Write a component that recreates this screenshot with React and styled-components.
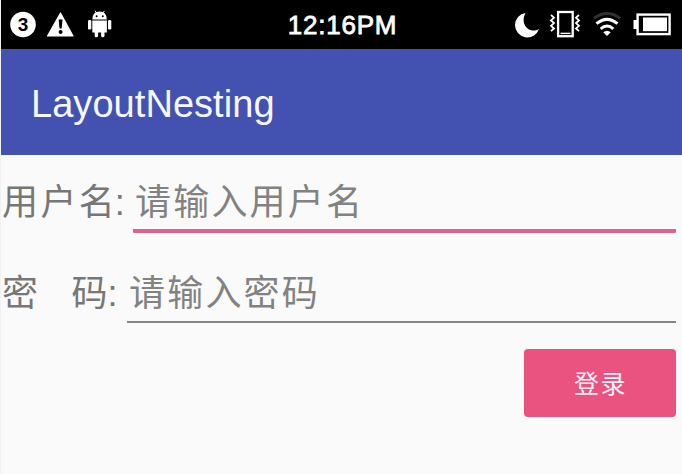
import React from 'react';
import styled, { createGlobalStyle } from 'styled-components';

const GlobalStyle = createGlobalStyle`
  * { box-sizing: border-box; }
  body { margin: 0; background: #fafafa; overflow: hidden; }
`;

const Screen = styled.div`
  display: flex;
  flex-direction: column;
  width: 682px;
  height: 474px;
  background: #fafafa;
  border-left: 1px solid #f2f2f4;
  font-family: "Liberation Sans", "Noto Sans CJK SC", sans-serif;
`;

const StatusBar = styled.header`
  display: grid;
  grid-template-columns: 1fr auto 1fr;
  flex: none;
  height: 49px;
  background: #000;
  color: #fff;
`;

const Icons = styled.svg`
  display: block;
  height: 49px;
  width: ${(p) => p.$width}px;
  justify-self: ${(p) => p.$align};
`;

const Badge = styled.text`
  font: bold 19px "Liberation Sans", sans-serif;
`;

const Clock = styled.time`
  font-size: 26px;
  line-height: 51px;
  letter-spacing: 0.8px;
  -webkit-text-stroke: 0.8px #fff;
  padding-left: 2px;
`;

const AppBar = styled.div`
  flex: none;
  height: 106px;
  padding-left: 30px;
  background: #4352b1;
`;

const Title = styled.h1`
  margin: 0;
  color: #f6f8ff;
  font-size: 38px;
  font-weight: 400;
  line-height: 110px;
  letter-spacing: 0.05px;
  white-space: nowrap;
`;

const Form = styled.form`
  display: flex;
  flex-direction: column;
  padding: 18px 6px 0 1px;
`;

const Row = styled.div`
  display: flex;
  height: ${(p) => p.$height}px;
  margin-bottom: ${(p) => p.$gap}px;
  color: #777;
  font-size: 36px;
  line-height: ${(p) => p.$line}px;
  white-space: pre;
`;

const Label = styled.label`
  flex: none;
  display: flex;
  width: ${(p) => p.$width}px;
  letter-spacing: 2.4px;
`;

const LabelGap = styled.span`
  width: ${(p) => p.$width}px;
`;

const LabelEnd = styled.span`
  letter-spacing: 0;
`;

const Field = styled.div`
  flex: 1;
  padding-left: 2px;
  color: #828282;
  letter-spacing: 2.2px;
  border-bottom: ${(p) => (p.$focused ? '4px solid #e0608e' : '2px solid #858585')};
  border-radius: ${(p) => (p.$focused ? '1px' : '0')};
`;

const LoginButton = styled.button`
  align-self: flex-end;
  width: 152px;
  height: 68px;
  padding: 0 0 2px 1px;
  border: 0;
  border-radius: 4px;
  background: #ea5280;
  color: #fff0f5;
  font: 400 25px/66px "Noto Sans CJK SC", sans-serif;
  letter-spacing: 1.5px;
`;

export default function App() {
  return (
    <>
      <GlobalStyle />
      <Screen>
        <StatusBar>
          <Icons $width={130} $align="start" viewBox="1 0 130 49">
            <circle cx="23" cy="24.5" r="12.8" fill="#fff" />
            <Badge x="23" y="31.2" textAnchor="middle" fill="#000">3</Badge>
            <path d="M60.5 13 L73 36 H47.5 Z" fill="#fff" stroke="#fff" strokeWidth="1.2" strokeLinejoin="round" />
            <path d="M58.7 19.5 h3.8 l-.8 9 h-2.2z" fill="#000" />
            <circle cx="60.6" cy="32" r="2" fill="#000" />
            <g fill="#fff">
              <path d="M92.3 19.5 Q92.5 11.5 99.5 11.5 Q106.7 11.5 106.8 19.5Z" />
              <path d="M95 10.8l2 3M104.4 10.8l-2 3" stroke="#fff" strokeWidth="1" />
              <path d="M92.3 20.5h14.6v12h-2.4v3.3q0 1.5-1.7 1.5t-1.7-1.5v-3.3h-3v3.3q0 1.5-1.7 1.5t-1.7-1.5v-3.3h-2.4z" />
              <rect x="88" y="20" width="3.3" height="9.5" rx="1.3" />
              <rect x="108" y="20" width="3.3" height="9.5" rx="1.3" />
              <circle cx="96.6" cy="16.2" r="1" fill="#000" />
              <circle cx="102.8" cy="16.2" r="1" fill="#000" />
            </g>
          </Icons>
          <Clock>12:16PM</Clock>
          <Icons $width={182} $align="end" viewBox="500 0 182 49">
            <path d="M525.5 13 A12.3 12.3 0 1 0 539 29 C529 34.5 519.5 24 525.5 13Z" fill="#fff" />
            <g fill="none" stroke="#fff">
              <rect x="558.1" y="12" width="14.6" height="24.2" strokeWidth="2.3" />
              <path d="M560.5 33.4h10" strokeWidth="1.4" />
              <path d="M551 15l3 2.7-3 2.7 3 2.7-3 2.7 3 2.7-3 2.7M579 15l-3 2.7 3 2.7-3 2.7 3 2.7-3 2.7 3 2.7" strokeWidth="1.8" />
              <path d="M593.5 18.5Q607 8.5 620.5 18.5" stroke="#303030" strokeWidth="2.7" />
              <path d="M596.5 23.7Q607 15 617.5 23.7M600.7 28.8Q607 23.3 613.3 28.8" strokeWidth="3" />
              <rect x="637.6" y="14.6" width="32" height="19.5" strokeWidth="2.4" />
            </g>
            <path d="M603.3 32.3Q607 29.2 610.7 32.3L607 36Z" fill="#fff" />
            <path d="M637 20h-3.5v9h3.5z" fill="#fff" />
            <rect x="643" y="17.5" width="24" height="13.7" fill="#fff" />
          </Icons>
        </StatusBar>
        <AppBar>
          <Title>LayoutNesting</Title>
        </AppBar>
        <Form>
          <Row $height={60} $gap={32} $line={59}>
            <Label $width={131}>用户<LabelEnd>名:</LabelEnd></Label>
            <Field $focused>请输入用户名</Field>
          </Row>
          <Row $height={58} $gap={26} $line={58}>
            <Label $width={125}>密<LabelGap $width={31} /><LabelEnd>码:</LabelEnd></Label>
            <Field>请输入密码</Field>
          </Row>
          <LoginButton type="button">登录</LoginButton>
        </Form>
      </Screen>
    </>
  );
}
